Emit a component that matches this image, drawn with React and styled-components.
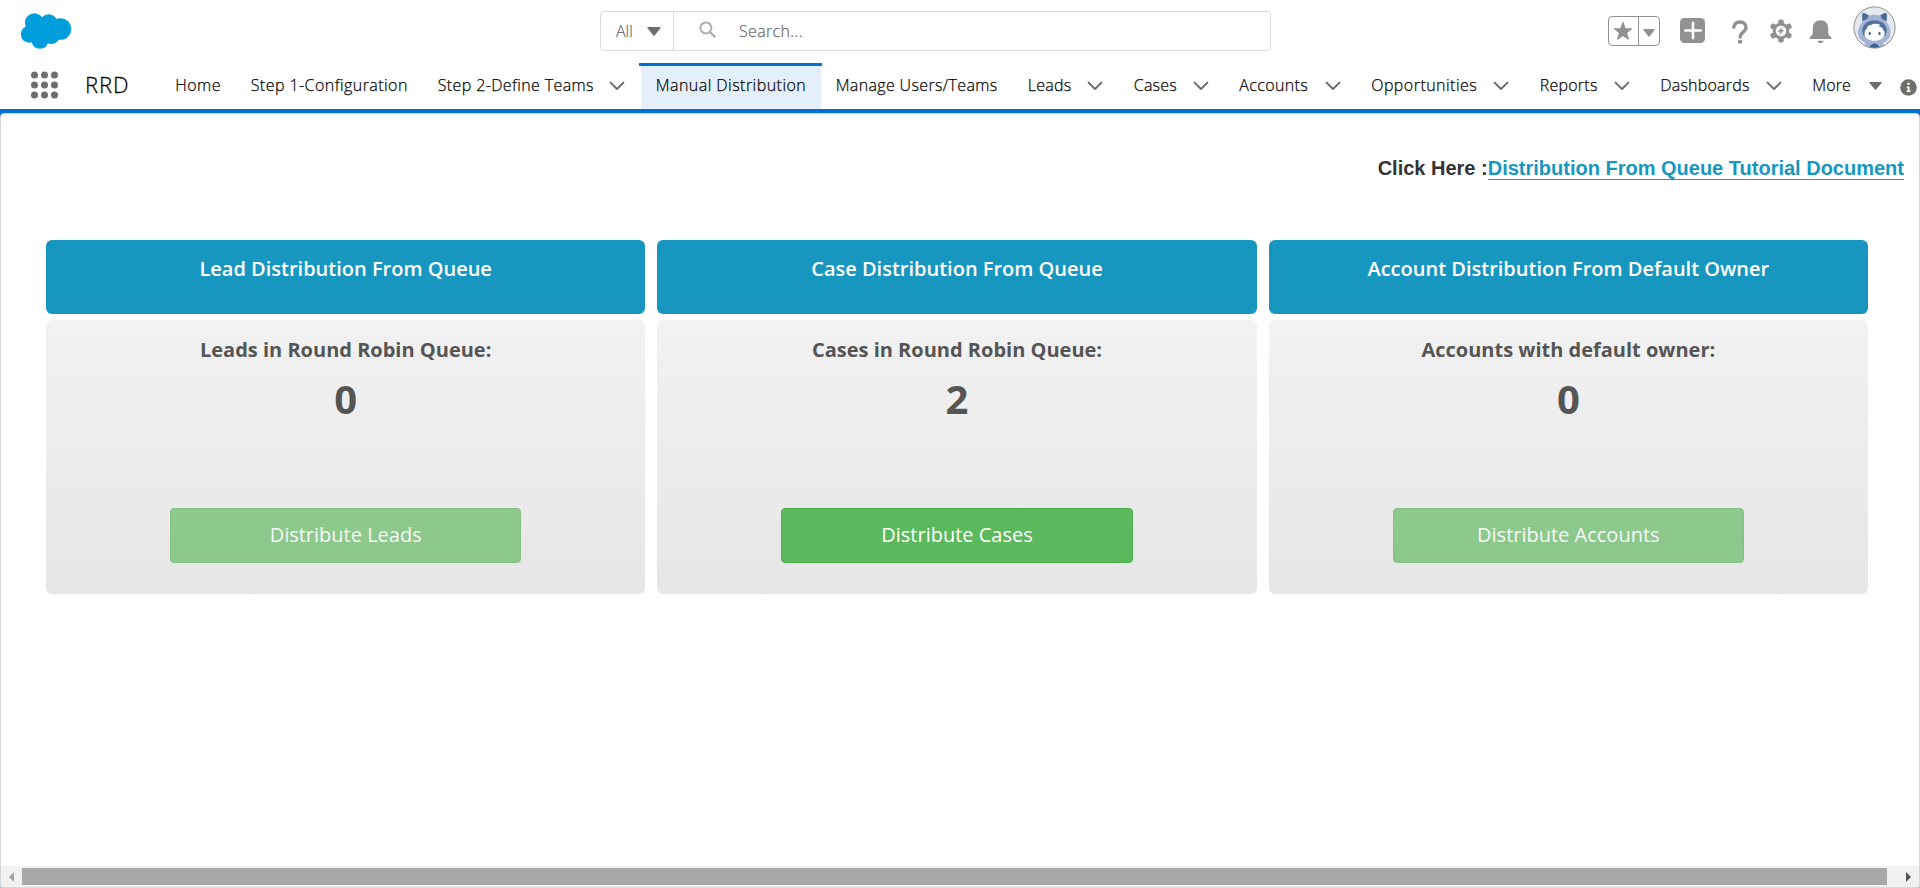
import React from 'react';
import styled, { createGlobalStyle } from 'styled-components';

const GlobalStyle = createGlobalStyle`
  *, *::before, *::after { box-sizing: border-box; }
  body { margin: 0; background: #fff; overflow: hidden; font-family: 'Open Sans', 'Noto Sans', sans-serif; }
  svg { display: block; flex: none; }
  button { font-family: inherit; }
`;

const Page = styled.div`
  display: flex;
  flex-direction: column;
  width: 1920px;
  height: 888px;
  overflow: hidden;
`;

const TopBar = styled.header`
  display: flex;
  align-items: flex-start;
  height: 63px;
`;

const Logo = styled.div`
  width: 600px;
  padding: 12px 0 0 20px;
`;

const SearchBox = styled.div`
  display: flex;
  width: 671px;
  height: 40px;
  margin-top: 11px;
  border: 1px solid #dddbda;
  border-radius: 4px;
  color: #706e6b;
  font-size: 16px;
  font-weight: 300;
  line-height: 39px;
  -webkit-text-stroke: 0.25px currentColor;
`;

const Scope = styled.div`
  display: flex;
  align-items: center;
  gap: 14px;
  width: 73px;
  padding-left: 15px;
  border-right: 1px solid #dddbda;
`;

const Query = styled.div`
  display: flex;
  flex: 1;
  padding-left: 25px;
  gap: 23px;
  letter-spacing: 0.35px;

  svg { margin-top: 9px; }
`;

const Tools = styled.div`
  display: flex;
  align-items: flex-start;
  margin-left: 337px;
`;

const Favorites = styled.div`
  display: flex;
  align-items: center;
  width: 52px;
  height: 30px;
  margin: 16px 20px 0 0;
  border: 1px solid #919191;
  border-radius: 4px;
`;

const FavoriteStar = styled.div`
  display: flex;
  align-items: center;
  justify-content: center;
  width: 30px;
  height: 28px;
  padding-right: 1px;
  border-right: 1px solid #919191;
`;

const FavoriteMenu = styled.div`
  display: flex;
  flex: 1;
  justify-content: center;
  padding-top: 3px;
`;

const ToolIcon = styled.div`
  padding-top: ${(p) => p.$top}px;
  margin-right: ${(p) => p.$gap || 0}px;
`;

const NavBar = styled.nav`
  display: flex;
  height: 50px;
  flex: none;
  border-bottom: 4px solid #0070d2;
`;

const Launcher = styled.div`
  width: 85px;
  padding: 8px 0 0 30px;
`;

const AppName = styled.div`
  width: 75.5px;
  font-size: 22px;
  font-weight: 300;
  line-height: 43px;
  letter-spacing: 0.9px;
  color: #080707;
  -webkit-text-stroke: 0.3px currentColor;
`;

const NavItem = styled.div`
  display: flex;
  flex: none;
  align-items: center;
  gap: 15px;
  height: 46px;
  padding: 0 ${(p) => (p.$menu ? 16 : 15)}px 0 15px;
`;

const ActiveItem = styled(NavItem)`
  position: relative;
  background: #e5effa;

  &::before {
    content: '';
    position: absolute;
    top: 0;
    left: -2px;
    right: -1px;
    height: 3px;
    background: #0070d2;
  }
`;

const NavLabel = styled.span`
  width: ${(p) => p.$width}px;
  margin-top: -2px;
  text-indent: -0.3px;
  font-size: 16px;
  font-weight: 300;
  line-height: 22px;
  letter-spacing: ${(p) => p.$track}px;
  white-space: nowrap;
  color: #080707;
  -webkit-text-stroke: 0.25px currentColor;
`;

const More = styled(NavItem)`
  gap: 17px;
  padding-right: 18px;
`;

const Info = styled.div`
  padding-top: 16px;
`;

const Frame = styled.div`
  flex: 1;
  min-height: 0;
  background: linear-gradient(#0070d2, #b5cbe6 60px);
`;

const Panel = styled.main`
  display: flex;
  flex-direction: column;
  height: 775px;
  border: 1px solid #d8d8d8;
  border-radius: 4px;
  background: linear-gradient(#f8f8f8, #fff 5px);
  overflow: hidden;
`;

const Help = styled.div`
  margin: 41px 15px 0 0;
  height: 85px;
  text-align: right;
  font: bold 20px/26px 'Liberation Sans', Arial, sans-serif;
  color: #333;
`;

const HelpLink = styled.a`
  display: inline-block;
  height: 25px;
  border-bottom: 1px solid #1797c0;
  color: #1797c0;
`;

const Cards = styled.section`
  display: grid;
  grid-template-columns: repeat(3, 1fr);
  column-gap: 12px;
  flex: 1;
  align-content: start;
  padding: 0 51px 0 45px;
`;

const Card = styled.article`
  display: flex;
  flex-direction: column;
  gap: 6px;
  text-align: center;
`;

const CardHead = styled.h2`
  height: 74px;
  margin: 0;
  padding-top: 15px;
  border-radius: 6px;
  background: #1797c0;
  color: #fff;
  font-size: 20px;
  font-weight: 600;
  line-height: 28px;
`;

const CardBody = styled.div`
  height: 274px;
  padding-top: 16px;
  border-radius: 6px;
  background: linear-gradient(#f2f2f2, #e6e6e6);
  color: #555;
`;

const Caption = styled.div`
  font-size: 20px;
  font-weight: 700;
  line-height: 28px;
`;

const Count = styled.div`
  height: 144px;
  padding-top: 7px;
  font-size: 40px;
  font-weight: 700;
  line-height: 56px;
`;

const Action = styled.button`
  width: 351.4px;
  height: 55px;
  padding: 0 0 1px;
  border: 1px solid #4cae4c;
  border-radius: 4px;
  background: #5cb85c;
  color: #fff;
  font-size: 20px;
  line-height: 28px;
  opacity: ${(p) => (p.disabled ? 0.65 : 1)};
`;

const ScrollTrack = styled.div`
  display: flex;
  align-items: center;
  height: 21px;
  padding: 0 8px 0 8px;
  background: #f1f1f1;
`;

const ScrollThumb = styled.div`
  flex: 1;
  height: 17px;
  margin: 0 19px 0 8px;
  background: #a8a8a8;
`;

const Triangle = ({ w, h, color = '#706e6b' }) => (
  <svg width={w} height={h} viewBox="0 0 14 9" preserveAspectRatio="none" fill={color}>
    <path d="M.9 0h12.2q1.1.3.4 1.1L7.7 8.4q-.7.8-1.4 0L.5 1.1Q-.2.3.9 0z" />
  </svg>
);

const Chevron = () => (
  <svg width="16" height="10" viewBox="0 0 16 10" fill="none" stroke="#706e6b" strokeWidth="2" strokeLinecap="round" strokeLinejoin="round">
    <path d="M1.6 1.6 8 8l6.4-6.4" />
  </svg>
);

const Cloud = () => (
  <svg width="53" height="38" viewBox="60 36 159 114" fill="#009edb">
    <circle cx="103" cy="68" r="28.5" />
    <circle cx="146" cy="70" r="27" />
    <circle cx="181" cy="87" r="32.5" />
    <circle cx="88" cy="103" r="25.5" />
    <circle cx="120" cy="120" r="26.5" />
    <circle cx="154" cy="106" r="26" />
    <path d="M88 70h80v40l-40 20-30-10z" />
  </svg>
);

const Dots = () => (
  <svg width="28" height="28" viewBox="0 0 28 28" fill="#706e6b">
    {[4.5, 14.5, 24.5].map((x) => [4, 14, 24].map((y) => <circle key={`${x}-${y}`} cx={x} cy={y} r="3.5" />))}
  </svg>
);

const Magnifier = () => (
  <svg width="17" height="17" viewBox="0 0 17 17" fill="none" stroke="#b0adab" strokeWidth="2">
    <circle cx="6.9" cy="6.9" r="5.5" />
    <path d="m11 11 4.6 4.6" strokeWidth="2.3" strokeLinecap="round" />
  </svg>
);

const Star = () => (
  <svg width="20" height="20" viewBox="0 0 20 20" fill="#919191">
    <path d="M10.6 1.4 12.7 7.3h5.7c.7 0 .9.6.4 1L14.2 12l1.8 6c.2.6-.4 1-.9.6L10 15.2l-5.1 3.4c-.5.4-1.1 0-.9-.6l1.8-6L1.2 8.3c-.5-.4-.3-1 .4-1h5.7L9.4 1.4c.2-.6 1-.6 1.2 0z" />
  </svg>
);

const Plus = () => (
  <svg width="25" height="25" viewBox="0 0 25 25">
    <rect width="25" height="25" rx="4.5" fill="#919191" />
    <path d="M13 4.8v15.4M5.3 12.5h15.4" stroke="#fff" strokeWidth="2.6" strokeLinecap="round" />
  </svg>
);

const Question = () => (
  <svg width="16" height="24" viewBox="0 0 16 24" fill="none" stroke="#919191" strokeWidth="3.3">
    <path d="M1.8 7.2C2.2 3.6 4.7 2 8 2c3.6 0 6 2.1 6 5.3 0 5.2-5.8 4.5-5.8 9.9" strokeLinecap="round" />
    <rect x="6" y="19.9" width="4.3" height="3.7" rx="1.2" fill="#919191" stroke="none" />
  </svg>
);

const Gear = () => (
  <svg width="22" height="24" viewBox="0 0 22 24">
    <g fill="#919191">
      {[0, 60, 120].map((a) => (
        <rect key={a} x="8.2" y="0.4" width="5.6" height="23.2" rx="2" transform={`rotate(${a} 11 12)`} />
      ))}
      <circle cx="11" cy="12" r="8.3" />
    </g>
    <circle cx="11" cy="12" r="5.3" fill="#fff" />
    <path d="m12.6 7.6-5 5.1h2.7l-1.200 3.800 5-5.400h-2.800z" fill="#919191" />
  </svg>
);

const Bell = () => (
  <svg width="23" height="24" viewBox="0 0 23 24" fill="#919191">
    <path d="M11.5.3c4.7 0 7.7 3.3 7.7 7.7v4.6c0 2 .9 3.4 2.8 4.5.8.5.8 1.9-.4 1.9H1.4C.2 19 .2 17.600 1 17.100c1.900-1.100 2.800-2.500 2.800-4.500V8C3.800 3.600 6.800.3 11.500.3z" />
    <path d="M8.800 20.700h5.400c.4 0 .5.3.3.6-1.500 2.500-4.500 2.500-6 0-.2-.3-.1-.6.3-.6z" />
  </svg>
);

const Avatar = () => (
  <svg width="43" height="43" viewBox="0 0 43 43">
    <clipPath id="face"><circle cx="21.500" cy="21.500" r="20.500" /></clipPath>
    <g clipPath="url(#face)">
      <rect width="43" height="43" fill="#e6e9ee" />
      <path d="M9.500 16 8.800 9q.2-3 3-2.200l5 2.600q4.700-1.500 9.400 0l5-2.600q2.800-.8 3 2.200l-.7 7q4.500 5.500 4 12-.9 6-7.500 9l3 6.500H9.500l3-6.500Q6 34 5 28q-.5-6.500 4.500-12z" fill="#a1b4d3" />
      <path d="M9.300 15V8.300q.3-1.700 2-1l4.200 2.300q-.5 3.300-3 4.200-2 .2-3.200 1.200zM33.700 15V8.300q-.3-1.700-2-1l-4.200 2.300q.5 3.300 3 4.200 2 .2 3.200 1.200z" fill="#4a6796" />
      <path d="M10.500 29.500C6.500 20.500 13 14.500 21.500 14.500s15 6 11 15z" fill="#54719f" />
      <path d="M11.500 27.500c.2-3 1-4.200 2.300-4.800.3-2.200 1.700-3.500 4.200-3.700 2.500-1.800 5.500-1.500 9.500-.2l-2.200 1.700c3 .2 4.400 1.500 4.800 3.200 1.200.8 1.600 2 1.500 3.800-.5 5-4.700 7.300-10.100 7.300s-9.800-2.300-10-7.300z" fill="#fff" />
      <ellipse cx="16.700" cy="27.500" rx="1.100" ry="1.700" fill="#3d5f94" />
      <ellipse cx="26.500" cy="27.500" rx="1.100" ry="1.700" fill="#3d5f94" />
      <ellipse cx="21.500" cy="41.500" rx="4.500" ry="4" fill="#3d5f94" />
    </g>
    <circle cx="21.500" cy="21.500" r="20.600" fill="none" stroke="#8d8d8d" />
  </svg>
);

const InfoIcon = () => (
  <svg width="17" height="17" viewBox="0 0 17 17">
    <circle cx="8.500" cy="8.500" r="8.300" fill="#706e6b" />
    <circle cx="8.500" cy="4.800" r="1.300" fill="#fff" />
    <path d="M6.700 7.400h2.900v4.300h1v1.300H6.600v-1.300h1V8.700h-.9z" fill="#fff" />
  </svg>
);

const before = [
  ['Home', 45.5, 0.5],
  ['Step 1-Configuration', 157, 0.44],
  ['Step 2-Define Teams', 156, 0.38, true],
];
const after = [
  ['Manage Users/Teams', 162, 0.35],
  ['Leads', 44, 0.25, true],
  ['Cases', 43.5, 0.25, true],
  ['Accounts', 70, 0.38, true],
  ['Opportunities', 106.5, 0.46, true],
  ['Reports', 58.5, 0.24, true],
  ['Dashboards', 90, 0.22, true],
];

const cards = [
  ['Lead Distribution From Queue', 'Leads in Round Robin Queue:', 0, 'Distribute Leads'],
  ['Case Distribution From Queue', 'Cases in Round Robin Queue:', 2, 'Distribute Cases'],
  ['Account Distribution From Default Owner', 'Accounts with default owner:', 0, 'Distribute Accounts'],
];

const Tab = ({ item: [label, width, track, menu] }) => (
  <NavItem $menu={menu}>
    <NavLabel $width={width} $track={track}>{label}</NavLabel>
    {menu && <Chevron />}
  </NavItem>
);

export default function App() {
  return (
    <Page>
      <GlobalStyle />
      <TopBar>
        <Logo><Cloud /></Logo>
        <SearchBox>
          <Scope>All <Triangle w={14} h={9} /></Scope>
          <Query><Magnifier />Search...</Query>
        </SearchBox>
        <Tools>
          <Favorites>
            <FavoriteStar><Star /></FavoriteStar>
            <FavoriteMenu><Triangle w={12} h={8} color="#919191" /></FavoriteMenu>
          </Favorites>
          <ToolIcon $top={18} $gap={27}><Plus /></ToolIcon>
          <ToolIcon $top={20} $gap={22}><Question /></ToolIcon>
          <ToolIcon $top={19} $gap={17}><Gear /></ToolIcon>
          <ToolIcon $top={20} $gap={21}><Bell /></ToolIcon>
          <ToolIcon $top={6}><Avatar /></ToolIcon>
        </Tools>
      </TopBar>
      <NavBar>
        <Launcher><Dots /></Launcher>
        <AppName>RRD</AppName>
        {before.map((item) => <Tab key={item[0]} item={item} />)}
        <ActiveItem>
          <NavLabel $width={150} $track={0.46}>Manual Distribution</NavLabel>
        </ActiveItem>
        {after.map((item) => <Tab key={item[0]} item={item} />)}
        <More>
          <NavLabel $width={39.5} $track={0.15}>More</NavLabel>
          <Triangle w={13} h={8} />
        </More>
        <Info><InfoIcon /></Info>
      </NavBar>
      <Frame>
        <Panel>
          <Help>Click Here :<HelpLink>Distribution From Queue Tutorial Document</HelpLink></Help>
          <Cards>
            {cards.map(([title, caption, count, action]) => (
              <Card key={title}>
                <CardHead>{title}</CardHead>
                <CardBody>
                  <Caption>{caption}</Caption>
                  <Count>{count}</Count>
                  <Action disabled={count === 0}>{action}</Action>
                </CardBody>
              </Card>
            ))}
          </Cards>
          <ScrollTrack>
            <svg width="5" height="10" viewBox="0 0 5 10" fill="#a3a3a3"><path d="M5 0v10L0 5z" /></svg>
            <ScrollThumb />
            <svg width="5" height="10" viewBox="0 0 5 10" fill="#505050"><path d="M0 0v10l5-5z" /></svg>
          </ScrollTrack>
        </Panel>
      </Frame>
    </Page>
  );
}
